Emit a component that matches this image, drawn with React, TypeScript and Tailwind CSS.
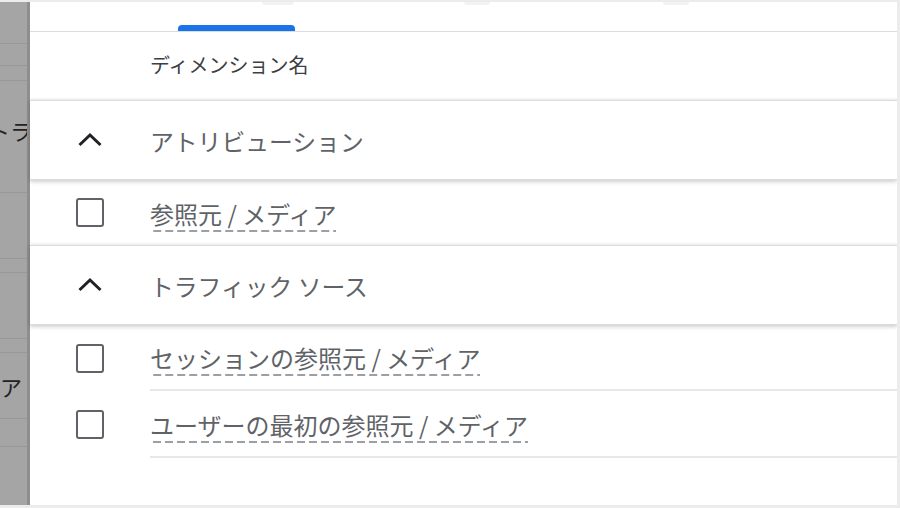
const font = "font-['Noto_Sans_CJK_JP','Noto_Sans',sans-serif]"

const dashed =
  "bg-[linear-gradient(to_right,#9aa0a6_66%,transparent_0)] bg-[length:12px_2px] bg-repeat-x bg-bottom pt-[8px] pb-[6px]"

function Chevron() {
  return (
    <svg width="28" height="28" viewBox="0 0 28 28" fill="none">
      <path d="M3.5 19 L14 9 L24.5 19" stroke="#202124" strokeWidth="3" strokeLinecap="butt" />
    </svg>
  )
}

function GroupRow({ label }: { label: string }) {
  return (
    <div className="relative z-10 h-[80px] flex items-center bg-white border-y border-[#dcdcdc] shadow-[0_2px_4px_rgba(0,0,0,0.18),0_-1px_3px_rgba(0,0,0,0.08)]">
      <div className="w-[120px] flex justify-center">
        <Chevron />
      </div>
      <span className="text-[23.8px] text-[#5f6368] leading-none pt-[1px]">{label}</span>
    </div>
  )
}

function ItemRow({ label, height, divider }: { label: string; height: string; divider?: boolean }) {
  return (
    <div className={`flex items-center ${height}`}>
      <div className="w-[120px] flex justify-center">
        <div className="w-[28px] h-[29px] border-[2.5px] border-[#5f6368] rounded-[3px]" />
      </div>
      <div className={`flex-1 h-full flex items-center ${divider ? "border-b-2 border-[#e8e8e8]" : ""}`}>
        <span className={`text-[24px] text-[#5f6368] leading-none ${dashed}`}>{label}</span>
      </div>
    </div>
  )
}

export default function App() {
  return (
    <div className={`w-[900px] h-[508px] flex bg-white overflow-hidden border-t-2 border-r-[3px] border-b-[3px] border-[#ececec] ${font}`}>
      {/* dimmed page behind the panel */}
      <div className="w-[30px] shrink-0 bg-[#a5a5a5] border-r-[3px] border-[#8e8e8e] flex flex-col text-[#222] text-[22px] leading-none overflow-hidden">
        <div className="h-[42px] border-b border-[#989898]" />
        <div className="h-[22px] border-b border-[#989898]" />
        <div className="h-[15px] border-b border-[#989898]" />
        <div className="h-[98px] flex items-center -ml-[12px] whitespace-nowrap">トラ</div>
        <div className="h-[14px] border-b border-[#989898]" />
        <div className="h-[66px] border-b border-[#989898]" />
        <div className="h-[14px] border-b border-[#989898]" />
        <div className="h-[66px] border-b border-[#989898]" />
        <div className="h-[14px] border-b border-[#989898]" />
        <div className="h-[66px] flex items-center whitespace-nowrap border-b border-[#989898]">ア・</div>
        <div className="h-[28px] border-b border-[#989898]" />
        <div className="flex-1" />
      </div>

      <div className="flex-1 flex flex-col">
        {/* tabs */}
        <div className="relative h-[30px] shrink-0 flex items-end border-b border-[#dadce0]">
          <div className="absolute top-0 left-[232px] w-[32px] h-[3px] rounded-b-full bg-[#f2f2f2]" />
          <div className="absolute top-0 left-[434px] w-[26px] h-[3px] rounded-b-full bg-[#f2f2f2]" />
          <div className="absolute top-0 left-[633px] w-[26px] h-[3px] rounded-b-full bg-[#f2f2f2]" />
          <div className="ml-[148px] w-[117px] h-[6px] rounded-t-[4px] bg-[#1a73e8]" />
        </div>

        {/* column header */}
        <div className="h-[68px] shrink-0 flex items-center pl-[120px]">
          <span className="text-[20px] text-[#3c4043] leading-none -mt-[3px]">ディメンション名</span>
        </div>

        <GroupRow label="アトリビューション" />
        <ItemRow label="参照元 / メディア" height="h-[65px]" />

        <GroupRow label="トラフィック ソース" />
        <ItemRow label="セッションの参照元 / メディア" height="h-[66px]" divider />
        <ItemRow label="ユーザーの最初の参照元 / メディア" height="h-[67px]" divider />

        <div className="flex-1" />
      </div>
    </div>
  )
}
